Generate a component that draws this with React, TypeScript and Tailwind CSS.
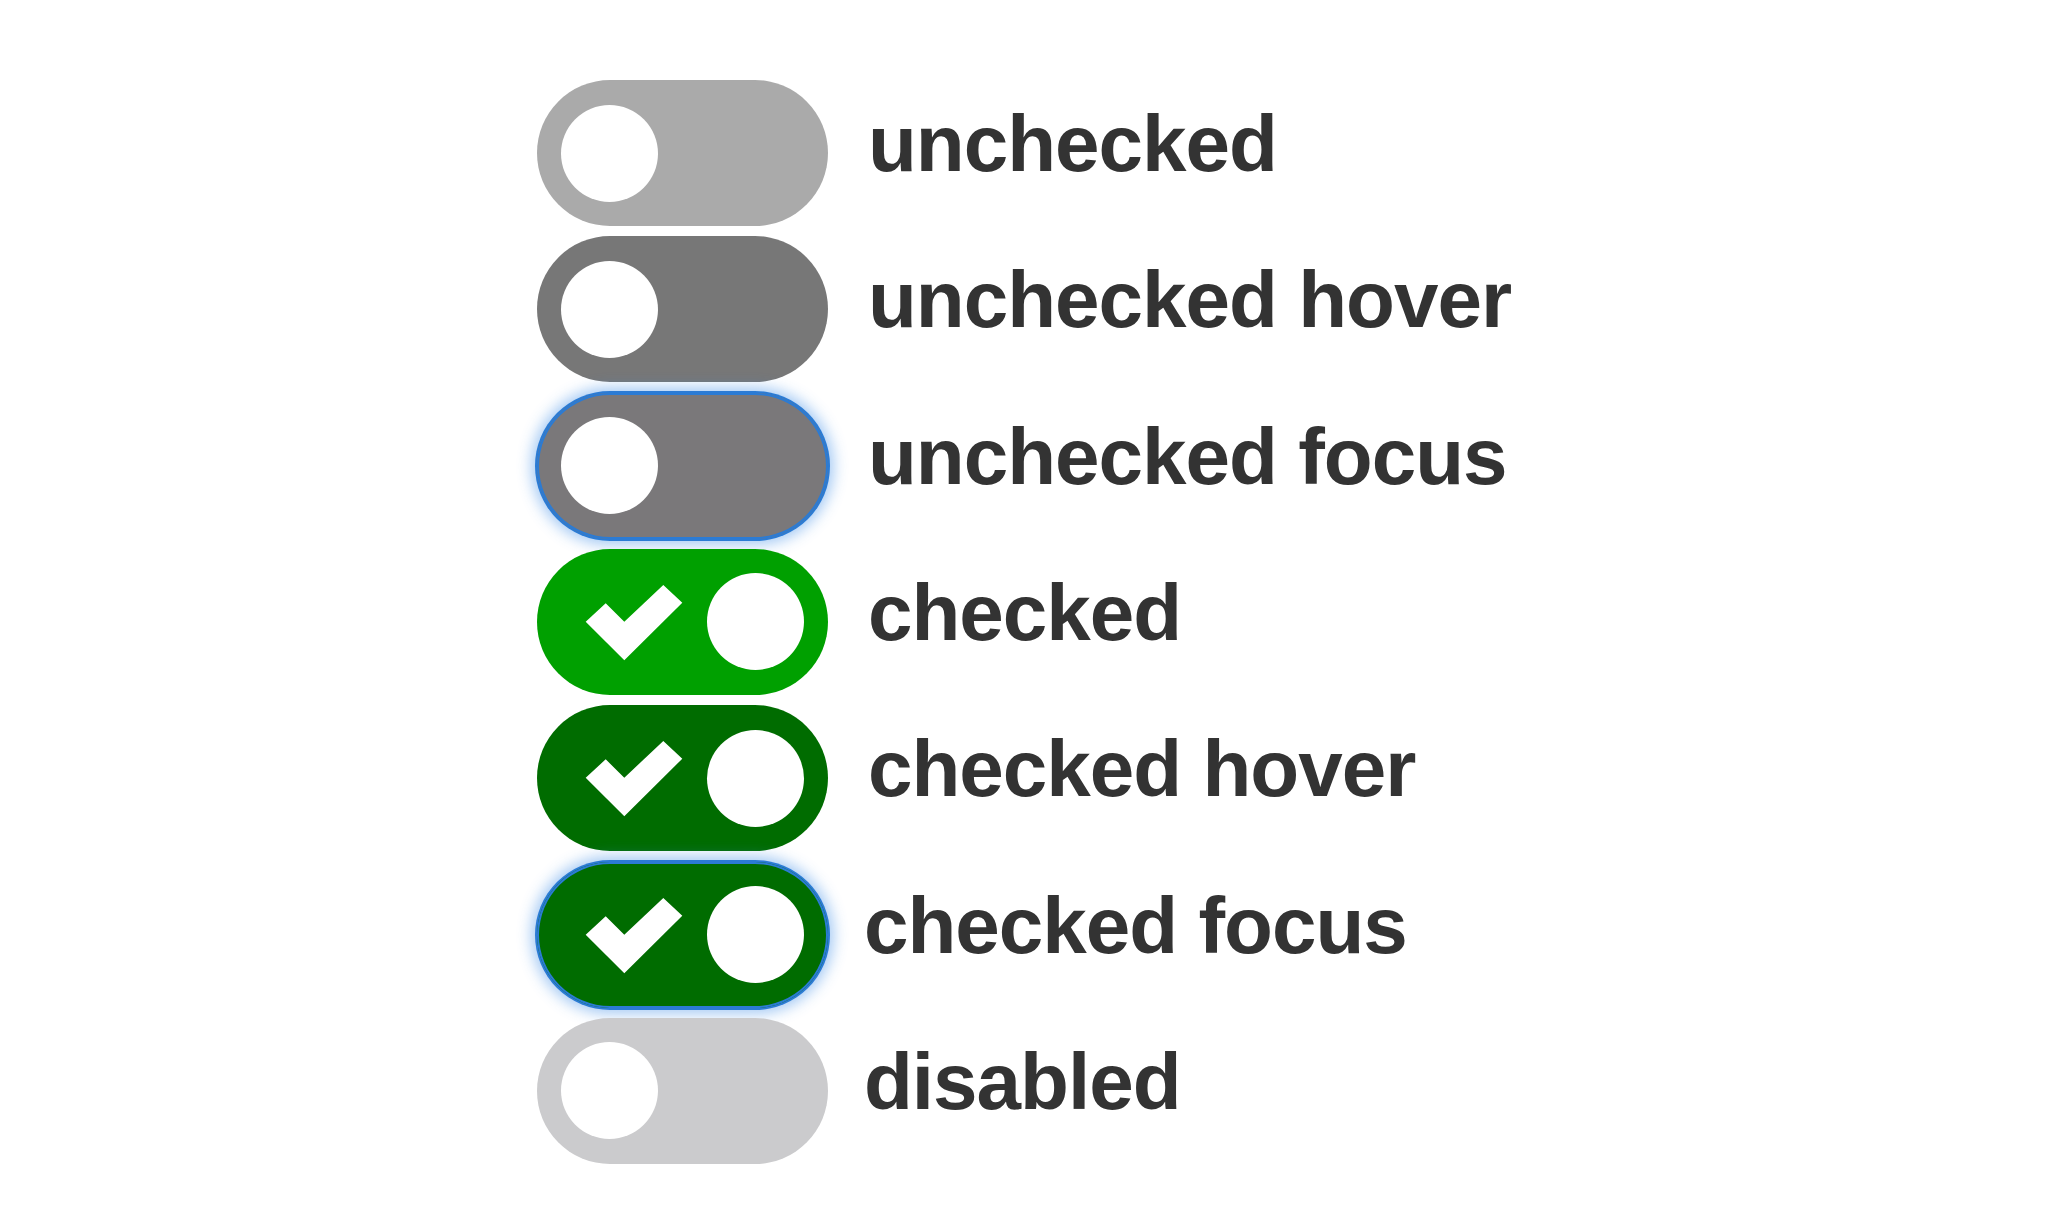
import { type ReactNode } from "react";

type ToggleState = {
  label: string;
  checked: boolean;
  track: string;
  focus?: boolean;
  labelOffset: string;
};

const states: ToggleState[] = [
  { label: "unchecked", checked: false, track: "bg-[#aaaaaa]", labelOffset: "ml-[40px]" },
  { label: "unchecked hover", checked: false, track: "bg-[#777777]", labelOffset: "ml-[40px]" },
  { label: "unchecked focus", checked: false, track: "bg-[#7a787a]", focus: true, labelOffset: "ml-[40px]" },
  { label: "checked", checked: true, track: "bg-[#00a000]", labelOffset: "ml-[40px]" },
  { label: "checked hover", checked: true, track: "bg-[#006c00]", labelOffset: "ml-[40px]" },
  { label: "checked focus", checked: true, track: "bg-[#006c00]", focus: true, labelOffset: "ml-[36px]" },
  { label: "disabled", checked: false, track: "bg-[#cbcbcd]", labelOffset: "ml-[36px]" },
];

function CheckMark() {
  return (
    <svg
      className="absolute left-0 top-0"
      width="291"
      height="146"
      viewBox="0 0 291 146"
      aria-hidden="true"
    >
      <path
        d="M48.7 72.7 L68.7 54.3 L87.3 72.7 L126.3 36 L145.3 53.7 L87.3 111.3 Z"
        fill="#ffffff"
      />
    </svg>
  );
}

function Track({ state, children }: { state: ToggleState; children?: ReactNode }) {
  const ring = state.focus
    ? "shadow-[inset_0_0_0_2px_#2b7bd4,0_0_0_2px_#2b7bd4,0_0_14px_6px_rgba(60,140,230,0.45)]"
    : "";
  return (
    <div
      className={`relative flex h-[146px] w-[291px] shrink-0 items-center rounded-full px-[24px] ${state.track} ${ring} ${
        state.checked ? "justify-end" : "justify-start"
      }`}
    >
      {children}
    </div>
  );
}

function Toggle({ state }: { state: ToggleState }) {
  return (
    <div className="flex items-center">
      <Track state={state}>
        {state.checked && <CheckMark />}
        <div className="relative h-[97px] w-[97px] rounded-full bg-white" />
      </Track>
      <span
        className={`${state.labelOffset} mb-[18px] whitespace-nowrap text-[80px] font-bold leading-none tracking-[-1px] text-[#333333]`}
        style={{ fontFamily: '"Liberation Sans", Arial, Helvetica, sans-serif' }}
      >
        {state.label}
      </span>
    </div>
  );
}

export default function App() {
  return (
    <div className="min-h-[1229px] w-full bg-white">
      <div className="flex flex-col gap-[10.33px] pl-[537px] pt-[80px]">
        {states.map((s) => (
          <Toggle key={s.label} state={s} />
        ))}
      </div>
    </div>
  );
}
